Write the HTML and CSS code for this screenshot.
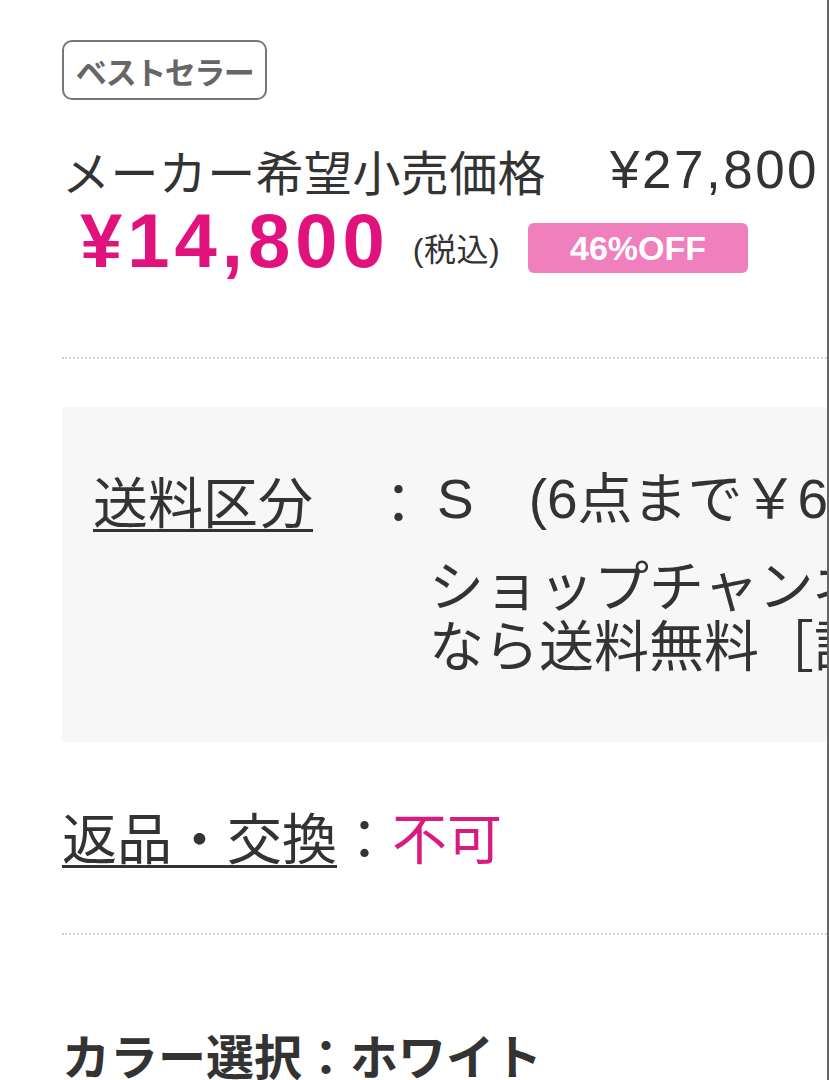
FILE: index.html
```html
<!DOCTYPE html>
<html lang="ja">
<head>
<meta charset="utf-8">
<link rel="stylesheet" href="styles.css">
</head>
<body>
<div class="page">
  <div class="badge">ベストセラー</div>
  <div class="list-price">
    <span class="lp-label">メーカー希望小売価格</span><span class="lp-value">¥27,800</span>
  </div>
  <div class="sale-row">
    <span class="sale-price">¥14,800</span>
    <span class="tax">(税込)</span>
    <span class="off">46%OFF</span>
  </div>
  <div class="dots"></div>
  <div class="ship-box">
    <div class="ship-row">
      <span class="ship-label">送料区分</span>
      <span class="ship-colon">：</span>
      <div class="ship-value">
        <div class="ship-line">S　(6点まで￥660)</div>
        <div class="ship-note">
          <div class="ship-line">ショップチャンネル会員</div>
          <div class="ship-line">なら送料無料［詳しくはこちら］</div>
        </div>
      </div>
    </div>
  </div>
  <div class="return-row">
    <span class="ret-label">返品・交換</span><span class="ret-colon">：</span><span class="ret-value">不可</span>
  </div>
  <div class="dots dots-2"></div>
  <div class="color-row">カラー選択：ホワイト</div>
</div>
</body>
</html>
```
FILE: styles.css
```css
html, body {
  margin: 0;
  padding: 0;
  background: #ffffff;
}
body {
  width: 829px;
  height: 1080px;
  overflow: hidden;
  font-family: "Liberation Sans", "Noto Sans CJK JP", sans-serif;
  color: #333333;
}
.page {
  box-sizing: border-box;
  width: 829px;
  height: 1080px;
  padding: 40px 0 0 62px;
  border-right: 2px solid #666666;
  overflow: hidden;
}
.badge {
  box-sizing: border-box;
  display: inline-flex;
  align-items: center;
  justify-content: center;
  width: 205px;
  height: 60px;
  border: 2px solid #777777;
  border-radius: 10px;
  font-family: "Noto Sans CJK JP", sans-serif;
  font-weight: 700;
  font-size: 31px;
  color: #666666;
  letter-spacing: -1.5px;
}
.list-price {
  margin-top: 42px;
  height: 56px;
  line-height: 56px;
  white-space: nowrap;
  display: flex;
  align-items: center;
}
.lp-label {
  font-family: "Noto Sans CJK JP", sans-serif;
  font-size: 48px;
  letter-spacing: 0.4px;
}
.lp-value {
  margin-left: 64px;
  font-size: 53px;
  letter-spacing: 2.5px;
}
.sale-row {
  margin-top: 2px;
  height: 80px;
  display: flex;
  align-items: center;
  white-space: nowrap;
  padding-left: 18px;
}
.sale-price {
  font-size: 76px;
  font-weight: 700;
  color: #e1127c;
  letter-spacing: 5px;
}
.tax {
  margin-left: 23px;
  margin-top: 14px;
  font-size: 32px;
  letter-spacing: 0.5px;
}
.off {
  margin-left: 28px;
  margin-top: 16px;
  width: 220px;
  height: 50px;
  box-sizing: border-box;
  border-radius: 6px;
  background: #f07fbd;
  color: #ffffff;
  font-size: 34px;
  font-weight: 700;
  display: flex;
  align-items: center;
  justify-content: center;
}
.dots {
  margin-top: 77px;
  border-top: 2px dotted #d2d2d2;
}
.ship-box {
  margin-top: 48px;
  height: 335px;
  box-sizing: border-box;
  background: #f7f7f7;
  padding: 62px 0 0 31px;
  font-size: 55px;
  line-height: 60px;
  white-space: nowrap;
}
.ship-row {
  display: flex;
}
.ship-label {
  font-family: "Noto Sans CJK JP", sans-serif;
  flex: none;
  margin-right: 58px;
  text-decoration: underline;
  text-decoration-thickness: 3px;
  text-underline-offset: 6px;
  align-self: flex-start;
}
.ship-colon {
  font-family: "Noto Sans CJK JP", sans-serif;
  width: 62px;
  flex: none;
}
.ship-value {
  margin-left: -4px;
}
.ship-line:first-child {
  padding-left: 8px;
}
.ship-note {
  margin-top: 23px;
  font-family: "Noto Sans CJK JP", sans-serif;
}
.ship-note .ship-line {
  padding-left: 0;
}
.return-row {
  margin-top: 63px;
  font-family: "Noto Sans CJK JP", sans-serif;
  font-size: 55px;
  line-height: 60px;
  white-space: nowrap;
}
.ret-label {
  text-decoration: underline;
  text-decoration-thickness: 3px;
  text-underline-offset: 6px;
}
.ret-value {
  color: #d81b7f;
}
.dots-2 {
  margin-top: 68px;
}
.color-row {
  margin-top: 89px;
  font-family: "Noto Sans CJK JP", sans-serif;
  font-weight: 700;
  font-size: 48px;
  line-height: 60px;
  white-space: nowrap;
}
```
